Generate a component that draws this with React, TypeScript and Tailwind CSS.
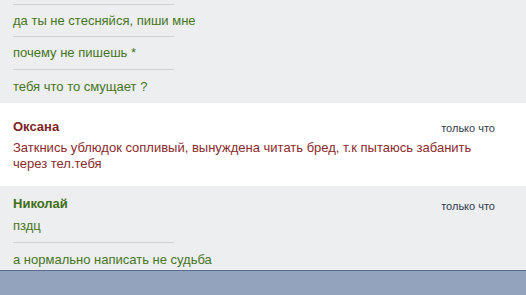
const font = { fontFamily: '"Liberation Sans", Arial, sans-serif' };

const Line = () => <div className="h-px w-[161px] bg-[#cfd2d6]" />;

const App = () => {
  return (
    <div className="w-[526px] h-[295px] bg-[#edeef0] flex flex-col overflow-hidden" style={font}>
      {/* previous messages */}
      <div className="pl-[13px] pt-[4px] flex flex-col">
        <Line />
        <div className="h-[31px] flex items-center text-[13px] text-[#46751c]">да ты не стесняйся, пиши мне</div>
        <Line />
        <div className="h-[32px] flex items-center text-[13px] text-[#46751c]">почему не пишешь *</div>
        <Line />
        <div className="h-[33px] flex items-center text-[13px] text-[#46751c]">тебя что то смущает ?</div>
      </div>

      {/* Оксана */}
      <div className="bg-white pl-[13px] pr-[31px] pt-[16px] pb-[14px]">
        <div className="flex justify-between items-center h-[16px]">
          <span className="text-[13px] font-bold text-[#7d1f23]">Оксана</span>
          <span className="text-[11px] text-[#2f3b4c] mt-[2px]">только что</span>
        </div>
        <div className="mt-[5px] w-[470px] text-[13px] leading-[16px] text-[#8b2a2c]">
          Заткнись ублюдок сопливый, вынуждена читать бред, т.к пытаюсь забанить через тел.тебя
        </div>
      </div>

      {/* Николай */}
      <div className="pl-[13px] pr-[31px] pt-[10px] h-[84px]">
        <div className="flex justify-between items-center h-[16px]">
          <span className="text-[13px] font-bold text-[#3f6d15]">Николай</span>
          <span className="text-[11px] text-[#2f3b4c] mt-[4px]">только что</span>
        </div>
        <div className="mt-[6px] h-[16px] leading-[16px] text-[13px] text-[#46751c]">пздц</div>
        <div className="mt-[8px]">
          <Line />
        </div>
        <div className="mt-[9px] h-[16px] leading-[16px] text-[13px] text-[#46751c]">а нормально написать не судьба</div>
      </div>

      {/* bottom bar */}
      <div className="h-px bg-[#5b6d8f]" />
      <div className="flex-1 bg-[#93a3bd]" />
    </div>
  );
};

export default App;
